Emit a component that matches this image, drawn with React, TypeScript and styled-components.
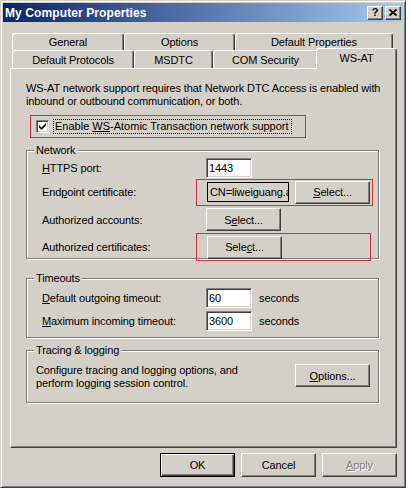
import React from 'react'
import styled, { createGlobalStyle } from 'styled-components'

const GlobalStyle = createGlobalStyle`
  html, body {
    margin: 0;
    padding: 0;
    background: #ffffff;
  }
  body {
    font-family: 'Liberation Sans', Arial, sans-serif;
    font-size: 11px;
    letter-spacing: -0.12px;
    color: #000000;
  }
`

const Window = styled.div`
  width: 406px;
  height: 488px;
  box-sizing: border-box;
  background: #d4d0c8;
  border: 1px solid;
  border-color: #d4d0c8 #404040 #404040 #d4d0c8;
  box-shadow: inset 1px 1px 0 #ffffff, inset -1px -1px 0 #808080;
  padding: 2px;
  display: flex;
  flex-direction: column;
`

const TitleBar = styled.div`
  height: 19px;
  display: flex;
  align-items: center;
  background: linear-gradient(to right, #0a246a, #a6caf0);
  padding: 0 2px 0 2px;
`

const TitleText = styled.span`
  flex: 1;
  color: #ffffff;
  font-weight: bold;
  font-size: 12px;
  letter-spacing: 0.1px;
`

const CaptionButton = styled.div`
  width: 16px;
  height: 14px;
  box-sizing: border-box;
  background: #d4d0c8;
  border: 1px solid;
  border-color: #ffffff #404040 #404040 #ffffff;
  box-shadow: inset -1px -1px 0 #808080;
  display: flex;
  align-items: center;
  justify-content: center;
  font-weight: bold;
  font-size: 11px;
  margin-left: 2px;
  line-height: 1;
`

const Body = styled.div`
  flex: 1;
  display: flex;
  flex-direction: column;
  padding: 11px 6px 0 7px;
`

const TabRow = styled.div`
  display: flex;
  padding-left: 2px;
`

const Tab = styled.div<{ $w: number; $h: number; $sel?: boolean }>`
  width: ${(p) => (p.$sel ? p.$w + 4 : p.$w)}px;
  height: ${(p) => (p.$sel ? p.$h + 3 : p.$h)}px;
  margin: ${(p) => (p.$sel ? '-2px -2px -1px -2px' : '0')};
  position: ${(p) => (p.$sel ? 'relative' : 'static')};
  z-index: ${(p) => (p.$sel ? 1 : 0)};
  box-sizing: border-box;
  background: #d4d0c8;
  border-top: 1px solid #ffffff;
  border-left: 1px solid #ffffff;
  border-right: 1px solid #404040;
  border-radius: 3px 3px 0 0;
  box-shadow: inset -1px 0 0 #808080;
  display: flex;
  align-items: ${(p) => (p.$sel ? 'flex-start' : 'center')};
  padding-top: ${(p) => (p.$sel ? 3 : 0)}px;
  justify-content: center;
  white-space: nowrap;
`

const Panel = styled.div`
  height: 380px;
  box-sizing: border-box;
  border: 1px solid;
  border-color: #ffffff #404040 #404040 #ffffff;
  box-shadow: inset -1px -1px 0 #808080;
  padding: 13px 15px 0 15px;
  display: flex;
  flex-direction: column;
`

const Para = styled.p`
  margin: 0;
  line-height: 13px;
  white-space: nowrap;
`

const Mark = styled.div<{ $w: number; $h: number }>`
  width: ${(p) => p.$w}px;
  height: ${(p) => p.$h}px;
  box-sizing: border-box;
  border: 1px solid #dc2f38;
  display: flex;
  align-items: center;
`

const CheckMark = styled(Mark)`
  margin: 7px 0 0 4px;
  padding-left: 5px;
`

const FieldMark = styled(Mark)`
  margin-left: -10px;
  padding-left: 10px;
`

const CheckBox = styled.span`
  width: 13px;
  height: 13px;
  box-sizing: border-box;
  background: #ffffff;
  border: 1px solid;
  border-color: #808080 #ffffff #ffffff #808080;
  box-shadow: inset 1px 1px 0 #404040, inset -1px -1px 0 #d4d0c8;
  display: flex;
  align-items: center;
  justify-content: center;
`

const FocusLabel = styled.span`
  margin-left: 4px;
  padding: 0 2px 0 1px;
  border: 1px dotted #000000;
  line-height: 13px;
  white-space: nowrap;
  letter-spacing: 0;
`

const Group = styled.fieldset<{ $mt: number; $pt: number; $pb: number }>`
  margin: ${(p) => p.$mt}px 0 0 0;
  padding: ${(p) => p.$pt}px 0 ${(p) => p.$pb}px 0;
  width: 353px;
  min-width: 0;
  box-sizing: border-box;
  border: 1px solid #808080;
  box-shadow: inset 1px 1px 0 #ffffff, 1px 1px 0 #ffffff;
`

const Legend = styled.legend`
  margin-left: 7px;
  padding: 0 2px;
  line-height: 12px;
  background: #d4d0c8;
  white-space: nowrap;
`

const Row = styled.div<{ $h: number; $mb?: number }>`
  height: ${(p) => p.$h}px;
  margin-bottom: ${(p) => p.$mb || 0}px;
  display: flex;
  align-items: center;
  padding-left: 15px;
`

const Label = styled.span`
  width: 164px;
  white-space: nowrap;
`

const TextBox = styled.div<{ $w: number; $ro?: boolean }>`
  width: ${(p) => p.$w}px;
  height: 20px;
  box-sizing: border-box;
  background: ${(p) => (p.$ro ? '#d4d0c8' : '#ffffff')};
  border: 1px solid;
  border-color: ${(p) => (p.$ro ? '#000000' : '#808080 #ffffff #ffffff #808080')};
  box-shadow: ${(p) => (p.$ro ? 'none' : 'inset 1px 1px 0 #404040, inset -1px -1px 0 #d4d0c8')};
  padding: 0 2px;
  display: flex;
  align-items: center;
  overflow: hidden;
  white-space: nowrap;
`

const Unit = styled.span`
  margin-left: 7px;
`

const Button = styled.div<{ $def?: boolean; $off?: boolean; $ml?: number }>`
  width: 75px;
  height: 23px;
  margin-left: ${(p) => p.$ml || 0}px;
  box-sizing: border-box;
  background: #d4d0c8;
  border: 1px solid;
  border-color: ${(p) => (p.$def ? '#000000' : '#ffffff #404040 #404040 #ffffff')};
  box-shadow: ${(p) =>
    p.$def
      ? 'inset 1px 1px 0 #ffffff, inset -1px -1px 0 #404040, inset -2px -2px 0 #808080'
      : 'inset -1px -1px 0 #808080'};
  display: flex;
  align-items: center;
  justify-content: center;
  flex-shrink: 0;
  color: ${(p) => (p.$off ? '#808080' : '#000000')};
  text-shadow: ${(p) => (p.$off ? '1px 1px 0 #ffffff' : 'none')};
`

const TraceBody = styled.div`
  display: flex;
  align-items: flex-start;
  justify-content: space-between;
  padding: 0 8px 0 9px;
`

const Footer = styled.div`
  display: flex;
  justify-content: flex-end;
  gap: 6px;
  margin-top: 5px;
  & > div {
    height: 24px;
  }
`

const U = styled.span`
  text-decoration: underline;
  text-underline-offset: 1px;
`

const backTabs = [
  { name: 'General', w: 112 },
  { name: 'Options', w: 111 },
  { name: 'Default Properties', w: 158 },
]

const frontTabs = [
  { name: 'Default Protocols', w: 122 },
  { name: 'MSDTC', w: 79 },
  { name: 'COM Security', w: 105 },
  { name: 'WS-AT', w: 77, sel: true },
]

const App = () => {
  return (
    <>
      <GlobalStyle />
      <Window>
        <TitleBar>
          <TitleText>My Computer Properties</TitleText>
          <CaptionButton>?</CaptionButton>
          <CaptionButton>
            <svg width="8" height="7" viewBox="0 0 8 7">
              <path d="M0.5 0.5 L7.5 6.5 M7.5 0.5 L0.5 6.5" stroke="#000" strokeWidth="1.8" />
            </svg>
          </CaptionButton>
        </TitleBar>
        <Body>
          <TabRow>
            {backTabs.map((t) => (
              <Tab key={t.name} $w={t.w} $h={17}>
                {t.name}
              </Tab>
            ))}
          </TabRow>
          <TabRow>
            {frontTabs.map((t) => (
              <Tab key={t.name} $w={t.w} $h={18} $sel={t.sel}>
                {t.name}
              </Tab>
            ))}
          </TabRow>
          <Panel>
            <Para>WS-AT network support requires that Network DTC Access is enabled with</Para>
            <Para>inbound or outbound communication, or both.</Para>
            <CheckMark $w={276} $h={23}>
              <CheckBox>
                <svg width="7" height="7" viewBox="0 0 7 7">
                  <path d="M0 2 L0 4.5 L2.5 7 L7 2.5 L7 0 L2.5 4.5 Z" fill="#000" />
                </svg>
              </CheckBox>
              <FocusLabel>
                Enable <U>WS</U>-Atomic Transaction network support
              </FocusLabel>
            </CheckMark>

            <Group $mt={6} $pt={1} $pb={0}>
              <Legend>Network</Legend>
              <Row $h={21}>
                <Label>
                  <U>H</U>TTPS port:
                </Label>
                <TextBox $w={46}>1443</TextBox>
              </Row>
              <Row $h={28}>
                <Label>
                  End<U>p</U>oint certificate:
                </Label>
                <FieldMark $w={177} $h={27}>
                  <TextBox $w={82} $ro>
                    CN=liweiguang.a
                  </TextBox>
                  <Button $ml={6}>
                    <span>
                      <U>S</U>elect...
                    </span>
                  </Button>
                </FieldMark>
              </Row>
              <Row $h={27}>
                <Label>Authorized accounts:</Label>
                <Button>
                  <span>
                    S<U>e</U>lect...
                  </span>
                </Button>
              </Row>
              <Row $h={28} $mb={-3}>
                <Label>Authorized certificates:</Label>
                <FieldMark $w={175} $h={28}>
                  <Button>
                    <span>
                      Sele<U>c</U>t...
                    </span>
                  </Button>
                </FieldMark>
              </Row>
            </Group>

            <Group $mt={13} $pt={2} $pb={5}>
              <Legend>Timeouts</Legend>
              <Row $h={23}>
                <Label>
                  <U>D</U>efault outgoing timeout:
                </Label>
                <TextBox $w={46}>60</TextBox>
                <Unit>seconds</Unit>
              </Row>
              <Row $h={23}>
                <Label>
                  <U>M</U>aximum incoming timeout:
                </Label>
                <TextBox $w={46}>3600</TextBox>
                <Unit>seconds</Unit>
              </Row>
            </Group>

            <Group $mt={6} $pt={8} $pb={12}>
              <Legend>Tracing &amp; logging</Legend>
              <TraceBody>
                <div>
                  <Para>Configure tracing and logging options, and</Para>
                  <Para>perform logging session control.</Para>
                </div>
                <Button>
                  <span>
                    <U>O</U>ptions...
                  </span>
                </Button>
              </TraceBody>
            </Group>
          </Panel>
          <Footer>
            <Button $def>OK</Button>
            <Button>Cancel</Button>
            <Button $off>
              <span>
                <U>A</U>pply
              </span>
            </Button>
          </Footer>
        </Body>
      </Window>
    </>
  )
}

export default App
